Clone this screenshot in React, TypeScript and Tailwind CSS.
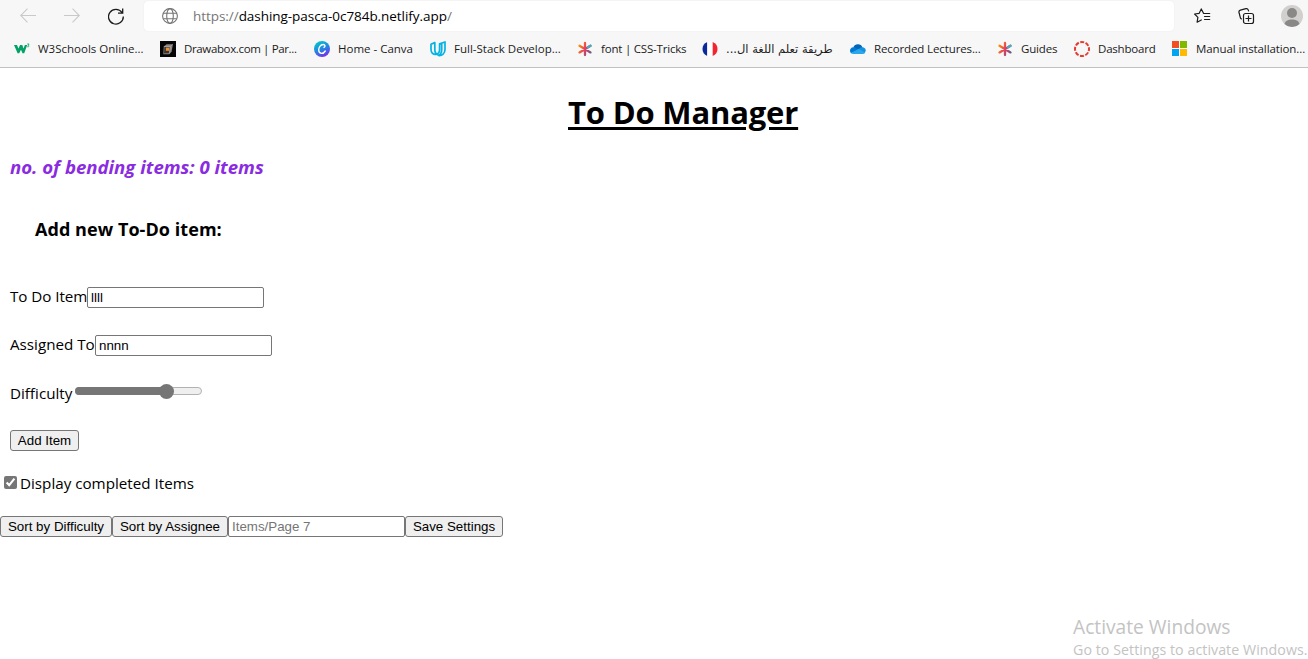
import { useState, type ReactNode } from "react";

function W3Icon() {
  return (
    <svg width="16" height="16" viewBox="0 0 16 16" fill="none">
      <path d="M0 4h3l1.400 3.500L6.100 4h2.200l1.200 3.500L10.900 4h2.300l-3 8.200H8.500L7 8.700 5.200 12.200H3.600z" fill="#04a067" />
      <path d="M13.200 3h1.900l-1 1.200c1.500.2 1.200 2-.9 1.500" stroke="#04a067" strokeWidth=".8" />
    </svg>
  );
}

function DrawaboxIcon() {
  return (
    <svg width="16" height="16" viewBox="0 0 16 16">
      <path fill="#050505" d="M0 0h16v16H0z" />
      <path d="m3.800 5.500 2.800-2.300h6.300l-1.300 7.500-2.400 2.500H3.300z" fill="#858585" />
      <path d="M4.500 6h5.300L9 12.200H4z" fill="#3a332e" />
      <path d="M5.900 6.600h3.200v3.200H5.900z" fill="#f28c28" />
      <path d="m3.800 5.500 6.500.1-1 7M10.300 5.600l2.400-2.200" fill="none" stroke="#b0b0b0" strokeWidth=".6" />
    </svg>
  );
}

function CanvaIcon() {
  return (
    <svg width="16" height="16" viewBox="0 0 16 16" fill="none">
      <defs>
        <linearGradient id="canva" x1="4" y1="1" x2="11" y2="16" gradientUnits="userSpaceOnUse">
          <stop stopColor="#00c4cc" />
          <stop offset=".55" stopColor="#2c7be5" />
          <stop offset="1" stopColor="#7d2ae8" />
        </linearGradient>
      </defs>
      <circle cx="8" cy="8" r="8" fill="url(#canva)" />
      <path d="M10 6.400c1.500-.8 1.300-3-.9-2.900C6.500 3.700 4.600 6.300 4.700 9c.1 4 4.300 4.500 6.600 1" stroke="#fff" strokeWidth="1.400" strokeLinecap="round" />
    </svg>
  );
}

function UdacityIcon() {
  return (
    <svg width="16" height="16" viewBox="0 0 16 16" fill="none" stroke="#02b3e4" strokeWidth="1.700" strokeLinejoin="round">
      <path d="M6 13.300C3.200 13.600 1 11.900 1 8.600V3.300l3.800-1.700v7.200c0 2.700 1.200 4.500 3.700 5.100" />
      <path d="M6 13.300c2.300-.3 3.600-1.800 3.600-4.700V2.900L15 1v7.600c0 3.800-2.800 6.200-6.500 5.900 2.200-1 3.200-2.800 3.200-5.700V2.300" />
    </svg>
  );
}

function StarBurst({ id }: { id: string }) {
  return (
    <svg width="16" height="16" viewBox="0 0 16 16">
      <defs>
        <linearGradient id={id} x1="2" y1="5" x2="14" y2="11" gradientUnits="userSpaceOnUse">
          <stop stopColor="#ff8a00" />
          <stop offset=".48" stopColor="#e54060" />
          <stop offset="1" stopColor="#6b5a86" />
        </linearGradient>
      </defs>
      <path d="M8 2v12M2.500 4.800l11 6.600M2.500 11.400l11-6.600" stroke={`url(#${id})`} strokeWidth="2.300" strokeLinecap="round" />
      <path d="m11 6.300 2.500-1.500" stroke="#46aebd" strokeWidth="2.300" strokeLinecap="round" />
    </svg>
  );
}

function FranceIcon() {
  return (
    <svg width="16" height="16" viewBox="0 0 16 16">
      <path d="M5.300 1v14a7.500 7.500 0 0 1 0-14" fill="#0a2a9c" />
      <path d="M5.300 1a8 8 0 0 1 5.400 0v14a8 8 0 0 1-5.400 0z" fill="#fff" />
      <path d="M10.700 1v14a7.500 7.500 0 0 0 0-14" fill="#f3232f" />
    </svg>
  );
}

function CloudIcon() {
  return (
    <svg width="16" height="16" viewBox="0 0 16 16">
      <path d="M3.300 6.300A5 5 0 0 1 12.500 6.500L8 9.500z" fill="#0364b8" />
      <path d="M3.300 6.200C1.200 6.300 0 8 0 9.800c0 1 .4 1.800 1 2.500l8-3.600-3-1.800a5 5 0 0 0-2.700-.7" fill="#0078d4" />
      <path d="M12.500 6.300a3.400 3.400 0 0 0-3.200 1.300L6.500 9l7.700 3.500 1.300-2c.8-2.200-.8-4.200-3-4.200" fill="#1490df" />
      <path d="m8.700 8.100 6.400 3.500c-.5.900-1.200 1.400-2.100 1.400H3.500C2.400 13 1.500 12.700.9 12z" fill="#28a8ea" />
    </svg>
  );
}

function CanvasIcon() {
  return (
    <svg width="16" height="16" viewBox="0 0 16 16" fill="none">
      <circle cx="8" cy="8" r="7" stroke="#e53b30" strokeWidth="2" strokeDasharray="4 1.498" strokeDashoffset="2" />
    </svg>
  );
}

function MicrosoftIcon() {
  return (
    <svg width="16" height="16" viewBox="0 0 16 16">
      <path fill="#f25022" d="M0 0h7v7H0z" />
      <path fill="#7fba00" d="M8 0h7v7H8z" />
      <path fill="#00a4ef" d="M0 8h7v7H0z" />
      <path fill="#ffb900" d="M8 8h7v7H8z" />
    </svg>
  );
}

function Bookmark({ icon, className, textClass, children }: { icon: ReactNode; className: string; textClass: string; children: ReactNode }) {
  return (
    <a className={`flex shrink-0 items-center gap-2 ${className}`}>
      <span className="size-4 shrink-0">{icon}</span>
      <span className={`whitespace-nowrap text-[11.5px] leading-4 text-[#1b1b1b] ${textClass}`}>{children}</span>
    </a>
  );
}

function Toolbar() {
  return (
    <div className="flex h-8 items-center">
      <div className="flex w-[144px] shrink-0 items-center pl-5">
        <svg width="16" height="16" viewBox="0 0 16 16" fill="none" stroke="#c9c9c9" strokeWidth="1.100">
          <path d="M16 7.500H.8M7.500.7.7 7.500l6.800 6.800" />
        </svg>
        <svg className="ml-7" width="16" height="16" viewBox="0 0 16 16" fill="none" stroke="#c9c9c9" strokeWidth="1.100">
          <path d="M0 7.500h15.200M8.500.7l6.800 6.800-6.800 6.800" />
        </svg>
        <svg className="ml-7" width="16" height="17" viewBox="0 0 16 17" fill="none" stroke="#1b1b1b" strokeWidth="1.300">
          <path d="M14 4.500A7.400 7.400 0 1 0 15.300 8.500M14.700.5v4.700h-4.700" />
        </svg>
      </div>
      <div className="flex h-[30px] w-[1030px] shrink-0 items-center rounded bg-white pl-[18px] shadow-[0_0_1px_#ddd]">
        <svg width="16" height="16" viewBox="0 0 16 16" fill="none" stroke="#757575" strokeWidth="1.100">
          <circle cx="8" cy="8" r="7.400" />
          <ellipse cx="8" cy="8" rx="3.300" ry="7.400" />
          <path d="M1.300 5.300h13.400M1.300 10.700h13.400" />
        </svg>
        <span className="ml-[15px] whitespace-nowrap text-[13.5px] leading-5 tracking-[-0.05px] text-[#767676]">
          https://<span className="text-black">dashing-pasca-0c784b.netlify.app</span>/
        </span>
      </div>
      <div className="flex shrink-0 items-center pl-5">
        <svg width="17" height="16" viewBox="0 0 17 16" fill="none" stroke="#1b1b1b" strokeWidth="1.200" strokeLinejoin="round" strokeLinecap="round">
          <path d="M10.500 5.500 9.500 5.300 7.300.9 5.200 5.300.6 6l3.300 3.300-.8 4.900 4.200-2.200M10.500 5.500h5.200M10.500 8.500h5.200M10.500 11.500h5.200" />
        </svg>
        <svg className="ml-[27px]" width="17" height="17" viewBox="0 0 17 17" fill="none" stroke="#1b1b1b" strokeWidth="1.200">
          <rect x="5.500" y="5.500" width="10" height="10" rx="2" />
          <path d="M10.500 7.500v6M7.500 10.500h6M3.700 11.300 2.500 10.200 1 4.500c-.3-1.200.3-2 1.400-2.300l5.500-1.500c1.200-.3 2 .2 2.400 1.400l.4 1.300" />
        </svg>
        <svg className="ml-[26px]" width="22" height="22" viewBox="0 0 22 22">
          <circle cx="11" cy="11" r="11" fill="#d2d0ce" />
          <circle cx="11" cy="8" r="5" fill="#8a8886" />
          <path d="M3.500 18.900c1-3.500 4-4.400 7.500-4.400s6.500.9 7.500 4.400A11 11 0 0 1 11 22a11 11 0 0 1-7.500-3.100" fill="#8a8886" />
        </svg>
      </div>
    </div>
  );
}

function Bookmarks() {
  return (
    <div className="flex h-[34px] items-center overflow-hidden pl-3.5">
      <Bookmark icon={<W3Icon />} className="w-[146px]" textClass="">W3Schools Online...</Bookmark>
      <Bookmark icon={<DrawaboxIcon />} className="w-[154px]" textClass="tracking-[-0.36px]">Drawabox.com | Par...</Bookmark>
      <Bookmark icon={<CanvaIcon />} className="w-[116px]" textClass="">Home - Canva</Bookmark>
      <Bookmark icon={<UdacityIcon />} className="w-[147px]" textClass="">Full-Stack Develop...</Bookmark>
      <Bookmark icon={<StarBurst id="burst-font" />} className="w-[125px]" textClass="tracking-[-0.2px]">font | CSS-Tricks</Bookmark>
      <Bookmark icon={<FranceIcon />} className="w-[148px]" textClass="font-['DejaVu_Sans',sans-serif]"><bdi dir="rtl">طريقة تعلم اللغة ال...</bdi></Bookmark>
      <Bookmark icon={<CloudIcon />} className="w-[147px]" textClass="tracking-[-0.12px]">Recorded Lectures...</Bookmark>
      <Bookmark icon={<StarBurst id="burst-guides" />} className="w-[77px]" textClass="tracking-[-0.15px]">Guides</Bookmark>
      <Bookmark icon={<CanvasIcon />} className="w-[98px]" textClass="tracking-[-0.2px]">Dashboard</Bookmark>
      <Bookmark icon={<MicrosoftIcon />} className="w-[136px]" textClass="tracking-[-0.1px]">Manual installation...</Bookmark>
    </div>
  );
}

const control = "h-[21px] shrink-0 border border-[#767676] font-['Liberation_Sans',Arial,sans-serif] text-[13.333px] leading-[15px] text-black";
const field = "w-[177px] rounded-[2px] bg-white px-[3px] outline-none placeholder:text-[#757575]";
const button = "rounded-[3px] bg-[#efefef] text-center whitespace-nowrap";

export default function App() {
  const [item, setItem] = useState("llll");
  const [assignee, setAssignee] = useState("nnnn");
  const [done, setDone] = useState(true);
  const [perPage, setPerPage] = useState("");
  const difficulty = 4;
  return (
    <div className="flex h-[659px] w-[1308px] flex-col overflow-hidden bg-white font-['Open_Sans','Noto_Sans',sans-serif] text-black">
      <header className="h-[68px] shrink-0 border-b border-[#c1c1c1] bg-[#f7f7f7]">
        <Toolbar />
        <Bookmarks />
      </header>
      <main className="flex flex-1 flex-col">
        <h1 className="mt-[22px] flex h-[45px] items-center pl-[568px] text-[31px] leading-[45px] font-bold">
          <span className="whitespace-nowrap underline decoration-[3px] underline-offset-[3px] tracking-[-0.17px]">To Do Manager</span>
        </h1>
        <h2 className="mt-5 h-6 pl-2.5 text-[18.6px] leading-6 font-bold italic text-[#8a2be2]">
          <span className="whitespace-nowrap">no. of bending items: 0 items</span>
        </h2>
        <form className="flex flex-col items-start pl-2.5" onSubmit={(e) => e.preventDefault()}>
          <h3 className="mt-[38px] h-6 pl-[25px] text-[18px] leading-6 font-bold">
            <span className="whitespace-nowrap tracking-[0.06px]">Add new To-Do item:</span>
          </h3>
          <label className="mt-[46px] flex h-[21px] items-center text-[15.2px] leading-[21px]">
            <span className="mb-0.5 w-[77px] whitespace-nowrap tracking-[-0.05px]">To Do Item</span>
            <input className={`${control} ${field}`} value={item} onChange={(e) => setItem(e.target.value)} />
          </label>
          <label className="mt-[27px] flex h-[21px] items-center text-[15.2px] leading-[21px]">
            <span className="mb-0.5 w-[85px] whitespace-nowrap">Assigned To</span>
            <input className={`${control} ${field}`} value={assignee} onChange={(e) => setAssignee(e.target.value)} />
          </label>
          <div className="mt-[27px] flex h-[21px] items-start text-[15.2px] leading-[21px]">
            <span className="w-[65px] whitespace-nowrap">Difficulty</span>
            <span className="mt-[4px] flex h-2 w-[127px] items-center rounded-full border border-[#b2b2b2] bg-[#efefef]" role="slider" aria-valuenow={difficulty}>
              <span className="-ml-px h-2 w-[86px] shrink-0 rounded-l-full bg-[#767676]" />
              <span className="-ml-[2px] size-[15px] shrink-0 rounded-full bg-[#767676]" />
            </span>
          </div>
          <button className={`${control} ${button} mt-[26px] w-[69px]`}>Add Item</button>
        </form>
        <label className="mt-[22px] flex h-[21px] items-center pl-1 text-[15.2px] leading-[21px]">
          <input type="checkbox" className="mb-0.5 size-[13px] accent-[#767676]" checked={done} onChange={() => setDone(!done)} />
          <span className="ml-[3px] whitespace-nowrap">Display completed Items</span>
        </label>
        <div className="mt-[22px] flex">
          <button className={`${control} ${button} w-[112px]`}>Sort by Difficulty</button>
          <button className={`${control} ${button} w-[116px]`}>Sort by Assignee</button>
          <input className={`${control} ${field}`} placeholder="Items/Page 7" value={perPage} onChange={(e) => setPerPage(e.target.value)} />
          <button className={`${control} ${button} w-[98px]`}>Save Settings</button>
        </div>
        <aside className="mt-auto flex h-[46px] flex-col pl-[1073px] whitespace-nowrap text-[#c3c3c3]">
          <span className="h-[27px] text-[19.2px] leading-[27px]">Activate Windows</span>
          <span className="h-[19px] text-[14.2px] leading-[19px] tracking-[0.06px]">Go to Settings to activate Windows.</span>
        </aside>
      </main>
    </div>
  );
}
